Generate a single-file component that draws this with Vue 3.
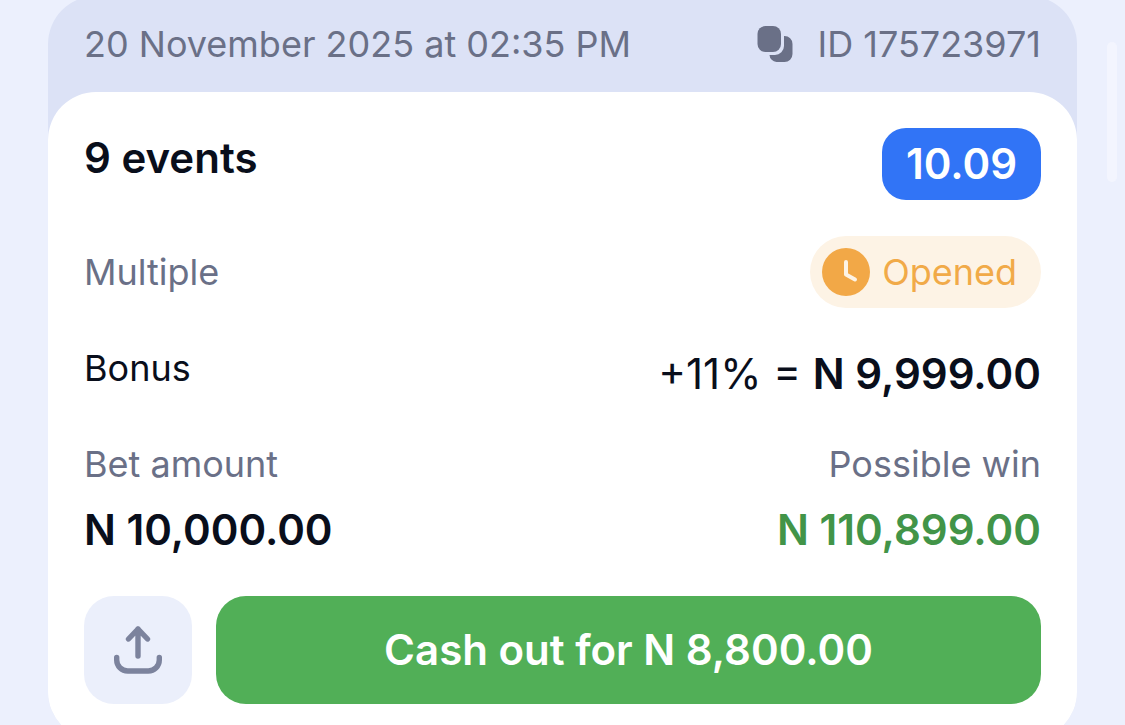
<script setup>
const bet = {
  date: '20 November 2025 at 02:35 PM',
  id: 'ID 175723971',
  events: '9 events',
  odds: '10.09',
  type: 'Multiple',
  status: 'Opened',
  bonusRate: '+11% =',
  bonus: 'N 9,999.00',
  amount: 'N 10,000.00',
  win: 'N 110,899.00',
  cashOut: 'Cash out for N 8,800.00',
}
</script>

<template>
  <main class="page">
    <article class="ticket">
      <header class="meta">
        <time>{{ bet.date }}</time>
        <button class="copy" type="button">
          <svg width="36" height="36" viewBox="0 0 36 36" aria-hidden="true">
            <rect x="0.500" y="0" width="23.500" height="26" rx="8" />
            <path d="M27 10h.500a8 8 0 0 1 8 8v10a8 8 0 0 1-8 8h-8a7.500 7.500 0 0 1-7-7H18a9 9 0 0 0 9-9z" />
          </svg>
          <span>{{ bet.id }}</span>
        </button>
      </header>

      <section class="card">
        <div class="row">
          <h1 class="strong">{{ bet.events }}</h1>
          <span class="odds">{{ bet.odds }}</span>
        </div>

        <div class="row middle">
          <span class="muted">{{ bet.type }}</span>
          <span class="status">
            <svg width="48" height="48" viewBox="0 0 48 48" aria-hidden="true">
              <circle cx="24" cy="24" r="24" />
              <path d="M24 14v12.500l9 5" />
            </svg>
            {{ bet.status }}
          </span>
        </div>

        <div class="row">
          <span class="label">Bonus</span>
          <span class="sum">{{ bet.bonusRate }} <b>{{ bet.bonus }}</b></span>
        </div>

        <dl class="row totals">
          <div>
            <dt>Bet amount</dt>
            <dd>{{ bet.amount }}</dd>
          </div>
          <div class="win">
            <dt>Possible win</dt>
            <dd>{{ bet.win }}</dd>
          </div>
        </dl>

        <div class="actions">
          <button class="share" type="button" aria-label="Share">
            <svg width="48" height="48" viewBox="0 0 48 48" aria-hidden="true">
              <path d="M24 30V3M14.500 13 24 3l9.500 10M2.700 31.500v2.500a11 11 0 0 0 11 11h20.600a11 11 0 0 0 11-11v-2.500" />
            </svg>
          </button>
          <button class="cash-out" type="button">{{ bet.cashOut }}</button>
        </div>
      </section>
    </article>
    <div class="scroll-thumb"></div>
  </main>
</template>

<style>
body {
  margin: 0;
  background: #ecf0fd;
}
</style>

<style scoped>
.page {
  position: relative;
  box-sizing: border-box;
  height: 100vh;
  padding: 0 48px;
  overflow: hidden;
  color: #090e1b;
  font-family: Inter, "Liberation Sans", sans-serif;
  font-size: 36px;
  line-height: 48px;
}

.ticket {
  margin-top: -4px;
  border-radius: 48px;
  background: #dce2f6;
}

.meta {
  display: flex;
  justify-content: space-between;
  padding: 24px 36px;
  color: #6a7087;
}

button {
  padding: 0;
  border: 0;
  font: inherit;
  cursor: pointer;
}

.copy {
  display: flex;
  align-items: center;
  gap: 24px;
  background: none;
  color: inherit;
}

.copy svg {
  fill: #6a7087;
}

.card {
  display: flex;
  flex-direction: column;
  gap: 36px;
  padding: 36px;
  border-radius: 48px;
  background: #fff;
}

.row {
  display: flex;
  justify-content: space-between;
  align-items: flex-start;
  margin: 0;
}

.middle {
  align-items: center;
}

.strong,
.sum,
dd {
  margin: 0;
  font-size: 42px;
  line-height: 60px;
}

.strong,
.sum b,
dd {
  font-weight: 600;
}

.odds {
  padding: 0 24px;
  border-radius: 24px;
  background: #3174f6;
  color: #fff;
  font-size: 42px;
  font-weight: 600;
  line-height: 72px;
}

.muted,
dt {
  color: #6a7087;
}

.status {
  display: flex;
  align-items: center;
  gap: 12px;
  padding: 12px 24px 12px 12px;
  border-radius: 36px;
  background: #fdf3e5;
  color: #f1aa48;
}

.status circle {
  fill: #f2a847;
}

.status path {
  fill: none;
  stroke: #fdf3e5;
  stroke-width: 4;
  stroke-linecap: round;
  stroke-linejoin: round;
}

dd {
  margin-top: 12px;
}

.win {
  text-align: right;
}

.win dd {
  color: #429448;
}

.actions {
  display: flex;
  gap: 24px;
}

.share {
  display: flex;
  align-items: center;
  justify-content: center;
  width: 108px;
  height: 108px;
  border-radius: 30px;
  background: #ebeffb;
}

.share path {
  fill: none;
  stroke: #7c839d;
  stroke-width: 5.4;
  stroke-linecap: round;
  stroke-linejoin: round;
}

.cash-out {
  flex: 1;
  border-radius: 30px;
  background: #51af57;
  color: #fff;
  font-size: 42px;
  font-weight: 600;
}

.scroll-thumb {
  position: absolute;
  top: 42px;
  right: 8px;
  width: 10px;
  height: 140px;
  border-radius: 5px;
  background: #f3f5fe;
}
</style>
